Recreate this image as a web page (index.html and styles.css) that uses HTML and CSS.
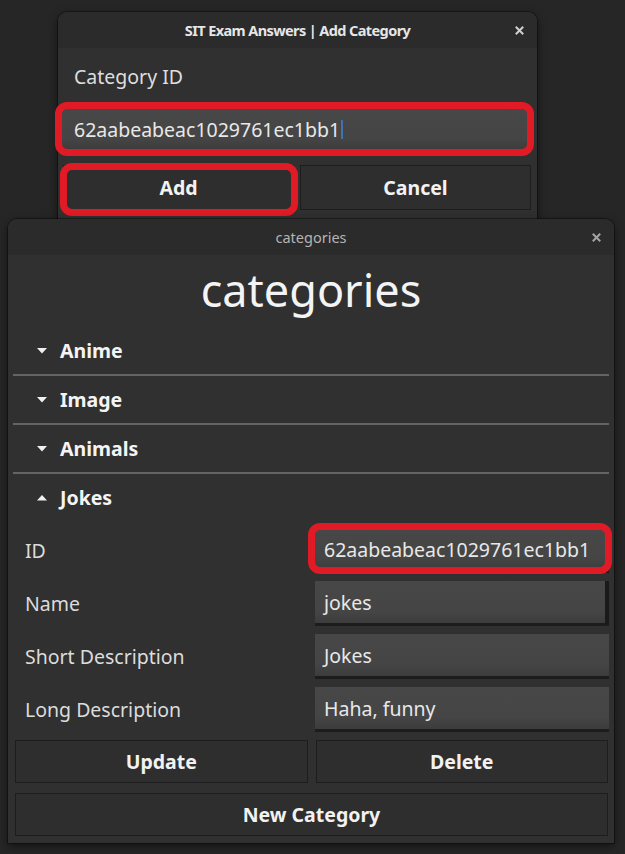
FILE: index.html
```html
<!DOCTYPE html>
<html lang="en">
<head>
<meta charset="utf-8">
<title>categories</title>
<link rel="stylesheet" href="styles.css">
</head>
<body>
<div class="desktop">
  <section class="win dialog">
    <header class="titlebar">
      <span></span>
      <span class="title title-focused">SIT Exam Answers | Add Category</span>
      <svg class="close" width="9" height="9" viewBox="0 0 9 9"><path d="M1.5 1.5 L7.5 7.5 M7.5 1.5 L1.5 7.5" stroke="#cfcfcf" stroke-width="2" stroke-linecap="square"/></svg>
    </header>
    <div class="dlg-body">
      <div class="dlg-label">Category ID</div>
      <div class="field dlg-field hl hl-dlg-input"><span class="val">62aabeabeac1029761ec1bb1</span><span class="caret"></span></div>
      <div class="btn-row dlg-btns">
        <div class="btn hl hl-btn">Add</div>
        <div class="btn">Cancel</div>
      </div>
    </div>
  </section>

  <section class="win cats">
    <header class="titlebar">
      <span></span>
      <span class="title title-unfocused">categories</span>
      <svg class="close" width="9" height="9" viewBox="0 0 9 9"><path d="M1.5 1.5 L7.5 7.5 M7.5 1.5 L1.5 7.5" stroke="#a4a4a4" stroke-width="2" stroke-linecap="square"/></svg>
    </header>
    <div class="cats-body">
      <h1 class="heading">categories</h1>
      <div class="sections">
        <div class="sec-head"><svg class="tri" width="10" height="6" viewBox="0 0 10 6"><polygon points="0,0 10,0 5,5.5" fill="#f0f0f0"/></svg><span>Anime</span></div>
        <div class="sep"></div>
        <div class="sec-head"><svg class="tri" width="10" height="6" viewBox="0 0 10 6"><polygon points="0,0 10,0 5,5.5" fill="#f0f0f0"/></svg><span>Image</span></div>
        <div class="sep"></div>
        <div class="sec-head"><svg class="tri" width="10" height="6" viewBox="0 0 10 6"><polygon points="0,0 10,0 5,5.5" fill="#f0f0f0"/></svg><span>Animals</span></div>
        <div class="sep"></div>
        <div class="sec-head"><svg class="tri" width="10" height="6" viewBox="0 0 10 6"><polygon points="0,5.5 10,5.5 5,0" fill="#f0f0f0"/></svg><span>Jokes</span></div>
      </div>
      <div class="form">
        <div class="f-label">ID</div>
        <div class="field f-input hl hl-id"><span class="val">62aabeabeac1029761ec1bb1</span></div>
        <div class="f-label">Name</div>
        <div class="field f-input hover"><span class="val">jokes</span></div>
        <div class="f-label">Short Description</div>
        <div class="field f-input"><span class="val">Jokes</span></div>
        <div class="f-label">Long Description</div>
        <div class="field f-input"><span class="val">Haha, funny</span></div>
      </div>
      <div class="btn-row cat-btns">
        <div class="btn cbtn">Update</div>
        <div class="btn cbtn">Delete</div>
      </div>
      <div class="btn cbtn wide">New Category</div>
    </div>
  </section>
</div>
</body>
</html>
```

FILE: styles.css
```css
* { box-sizing: border-box; }
html, body {
  margin: 0;
  padding: 0;
  background: #262626;
}
body {
  width: 625px;
  height: 854px;
  overflow: hidden;
  font-family: "Noto Sans", "Open Sans", sans-serif;
  color: #e4e4e4;
}
.desktop {
  position: relative;
  width: 625px;
  height: 854px;
}
.win {
  position: absolute;
  background: #303030;
  border-radius: 9px 9px 0 0;
  box-shadow: 0 0 0 1px rgba(0,0,0,0.35), 0 3px 10px rgba(0,0,0,0.55);
  display: flex;
  flex-direction: column;
}
.dialog {
  left: 58px;
  top: 12px;
  width: 479px;
  height: 212px;
  z-index: 1;
}
.cats {
  left: 8px;
  top: 219px;
  width: 606px;
  height: 624px;
  z-index: 2;
}
.titlebar {
  height: 36px;
  flex: none;
  background: #2b2b2b;
  border-radius: 9px 9px 0 0;
  display: grid;
  grid-template-columns: 1fr auto 1fr;
  align-items: center;
  padding: 0 13px 0 13px;
}
.title {
  font-size: 14px;
  white-space: nowrap;
}
.title-focused {
  font-weight: 700;
  color: #e6e6e6;
  font-size: 14.5px;
  letter-spacing: -0.6px;
}
.title-unfocused {
  font-weight: 400;
  color: #b4b4b4;
  font-size: 14.5px;
}
.close {
  justify-self: end;
}

/* dialog */
.dlg-body {
  display: flex;
  flex-direction: column;
  padding: 12px 6px 0 5px;
}
.dlg-label {
  font-size: 19.5px;
  line-height: 34px;
  height: 34px;
  padding-left: 11px;
  color: #dedede;
}
.field {
  display: flex;
  align-items: center;
  background: linear-gradient(#474747 0%, #454545 72%, #3c3c3c 100%);
  font-size: 19.5px;
  color: #e8e8e8;
  white-space: nowrap;
}
.dlg-field {
  margin-top: 15px;
  height: 41px;
  margin-left: -1px;
  margin-right: 3px;
  padding-left: 12px;
}
.caret {
  display: inline-block;
  width: 2px;
  height: 19px;
  background: #3f73ad;
  margin-left: 1px;
}
.btn-row {
  display: grid;
  grid-template-columns: 1fr 1fr;
}
.dlg-btns {
  margin-top: 15px;
  gap: 6px;
}
.btn {
  height: 45px;
  display: flex;
  align-items: center;
  justify-content: center;
  background: #2e2e2e;
  border: 1px solid #1d1d1d;
  font-weight: 700;
  font-size: 19.5px;
  color: #f2f2f2;
}

/* highlight rings (annotations drawn over the UI) */
.hl { position: relative; }
.hl::after {
  content: "";
  position: absolute;
  border: 7px solid #e01b26;
  border-radius: 12px;
  pointer-events: none;
}
.hl-dlg-input::after { left: -7px; right: -6px; top: -7px; bottom: -6px; }
.hl-btn::after { left: -4px; right: -5px; top: -3px; bottom: -7px; border-width: 7px; }
.hl-id::after { left: -7px; right: -3px; top: -5px; bottom: -4px; }

/* categories window */
.cats-body {
  display: flex;
  flex-direction: column;
  padding: 7px 5px 7px 5px;
}
.heading {
  margin: 0 0 9px 0;
  height: 56px;
  line-height: 56px;
  font-size: 45px;
  font-weight: 400;
  text-align: center;
  color: #f4f4f4;
}
.sections {
  display: flex;
  flex-direction: column;
}
.sec-head {
  height: 47px;
  display: flex;
  align-items: center;
  gap: 13px;
  padding-left: 24px;
  font-weight: 700;
  font-size: 19.5px;
  color: #f4f4f4;
}
.tri { flex: none; margin-top: 1px; }
.sep {
  height: 2px;
  background: #646464;
}
.form {
  margin-top: 7px;
  display: grid;
  grid-template-columns: 1fr 1fr;
  grid-auto-rows: 45px;
  column-gap: 7px;
  row-gap: 8px;
  padding: 0 0 0 1px;
}
.f-label {
  display: flex;
  align-items: center;
  padding-left: 11px;
  font-size: 19.5px;
  color: #dcdcdc;
}
.f-input {
  padding-left: 9px;
  border-bottom: 3px solid #1c1c1c;
}
.f-input .val { margin-top: 1px; }
.hover {
  border-right: 4px solid #1a1a1a;
}
.cat-btns {
  margin-top: 8px;
  gap: 8px;
  padding: 0 1px 0 2px;
}
.cbtn { height: 43px; }
.wide {
  margin: 10px 1px 0 2px;
}
```
